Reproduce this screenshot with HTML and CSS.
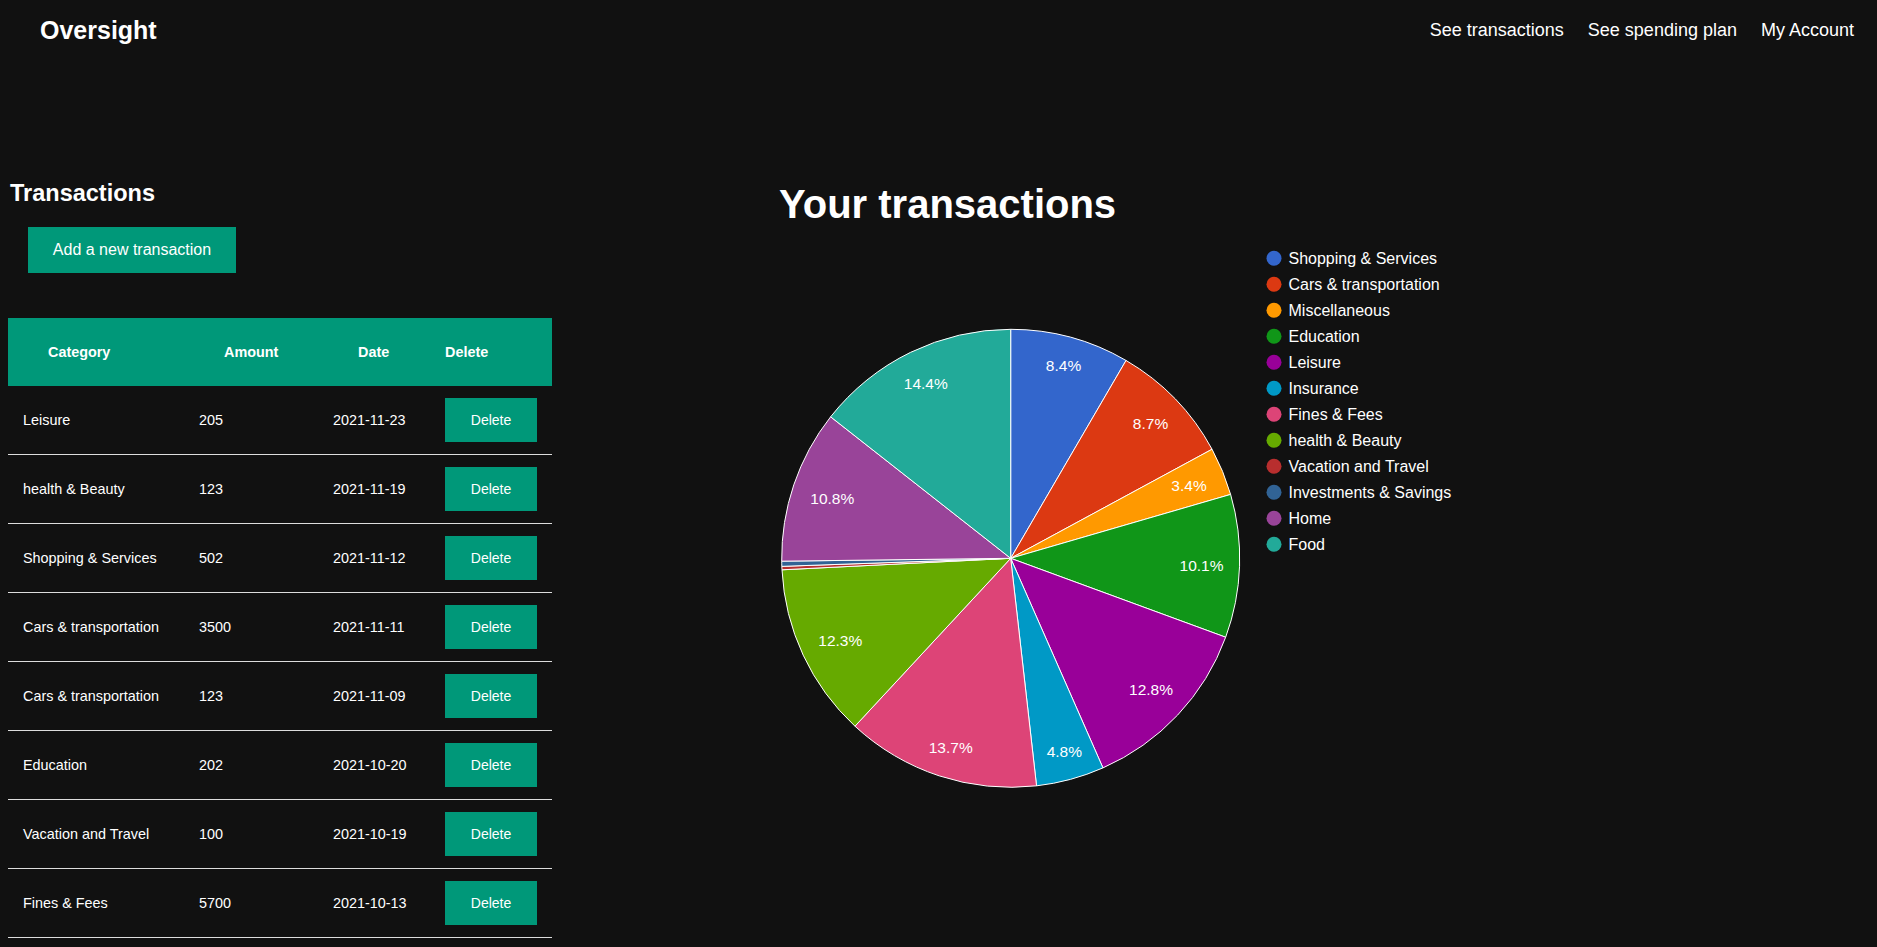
FILE: index.html
```html
<!DOCTYPE html>
<html lang="en">
<head>
<meta charset="utf-8">
<title>Oversight</title>
<link rel="stylesheet" href="styles.css">
</head>
<body>
<header class="topbar">
  <div class="brand">Oversight</div>
  <nav class="nav">
    <a href="#">See transactions</a>
    <a href="#">See spending plan</a>
    <a href="#">My Account</a>
  </nav>
</header>
<main class="content">
  <section class="transactions">
    <h2 class="section-title">Transactions</h2>
    <button class="btn add-btn">Add a new transaction</button>
    <table class="tx-table">
      <colgroup>
        <col class="c-cat"><col class="c-amt"><col class="c-date"><col class="c-del">
      </colgroup>
      <thead>
        <tr><th>Category</th><th>Amount</th><th>Date</th><th>Delete</th></tr>
      </thead>
      <tbody>
        <tr><td>Leisure</td><td>205</td><td>2021-11-23</td><td><button class="btn del-btn">Delete</button></td></tr>
        <tr><td>health &amp; Beauty</td><td>123</td><td>2021-11-19</td><td><button class="btn del-btn">Delete</button></td></tr>
        <tr><td>Shopping &amp; Services</td><td>502</td><td>2021-11-12</td><td><button class="btn del-btn">Delete</button></td></tr>
        <tr><td>Cars &amp; transportation</td><td>3500</td><td>2021-11-11</td><td><button class="btn del-btn">Delete</button></td></tr>
        <tr><td>Cars &amp; transportation</td><td>123</td><td>2021-11-09</td><td><button class="btn del-btn">Delete</button></td></tr>
        <tr><td>Education</td><td>202</td><td>2021-10-20</td><td><button class="btn del-btn">Delete</button></td></tr>
        <tr><td>Vacation and Travel</td><td>100</td><td>2021-10-19</td><td><button class="btn del-btn">Delete</button></td></tr>
        <tr><td>Fines &amp; Fees</td><td>5700</td><td>2021-10-13</td><td><button class="btn del-btn">Delete</button></td></tr>
      </tbody>
    </table>
  </section>
  <section class="chart">
    <h1 class="chart-title">Your transactions</h1>
    <svg class="pie" width="730" height="565" viewBox="770 235 730 565" xmlns="http://www.w3.org/2000/svg">
      <g class="slices" stroke="#ffffff" stroke-width="1">
        <path fill="#3366cc" d="M1010.7 558.3 L1010.7 329.3 A229 229 0 0 1 1126.04 360.46 Z"/>
        <path fill="#dc3912" d="M1010.7 558.3 L1126.04 360.46 A229 229 0 0 1 1212.06 449.25 Z"/>
        <path fill="#ff9900" d="M1010.7 558.3 L1212.06 449.25 A229 229 0 0 1 1230.61 494.41 Z"/>
        <path fill="#109618" d="M1010.7 558.3 L1230.61 494.41 A229 229 0 0 1 1225.67 637.23 Z"/>
        <path fill="#990099" d="M1010.7 558.3 L1225.67 637.23 A229 229 0 0 1 1102.97 767.89 Z"/>
        <path fill="#0099c6" d="M1010.7 558.3 L1102.97 767.89 A229 229 0 0 1 1036.54 785.84 Z"/>
        <path fill="#dd4477" d="M1010.7 558.3 L1036.54 785.84 A229 229 0 0 1 854.98 726.20 Z"/>
        <path fill="#66aa00" d="M1010.7 558.3 L854.98 726.20 A229 229 0 0 1 781.99 569.80 Z"/>
        <path fill="#b82e2e" d="M1010.7 558.3 L781.99 569.80 A229 229 0 0 1 781.84 566.36 Z"/>
        <path fill="#316395" d="M1010.7 558.3 L781.84 566.36 A229 229 0 0 1 781.72 561.18 Z"/>
        <path fill="#994499" d="M1010.7 558.3 L781.72 561.18 A229 229 0 0 1 830.63 416.82 Z"/>
        <path fill="#22aa99" d="M1010.7 558.3 L830.63 416.82 A229 229 0 0 1 1010.7 329.3 Z"/>
      </g>
      <g class="pie-labels" text-anchor="middle">
        <text x="1063.5" y="371">8.4%</text>
        <text x="1150.5" y="428.5">8.7%</text>
        <text x="1189" y="490.5">3.4%</text>
        <text x="1201.5" y="570.5">10.1%</text>
        <text x="1151" y="695">12.8%</text>
        <text x="1064.3" y="756.5">4.8%</text>
        <text x="950.7" y="753">13.7%</text>
        <text x="840.3" y="645.5">12.3%</text>
        <text x="832.3" y="504">10.8%</text>
        <text x="925.8" y="389">14.4%</text>
      </g>
      <g class="legend">
        <circle cx="1274" cy="258.3" r="7.5" fill="#3366cc"/><text x="1288.5" y="264">Shopping &amp; Services</text>
        <circle cx="1274" cy="284.3" r="7.5" fill="#dc3912"/><text x="1288.5" y="290">Cars &amp; transportation</text>
        <circle cx="1274" cy="310.3" r="7.5" fill="#ff9900"/><text x="1288.5" y="316">Miscellaneous</text>
        <circle cx="1274" cy="336.3" r="7.5" fill="#109618"/><text x="1288.5" y="342">Education</text>
        <circle cx="1274" cy="362.3" r="7.5" fill="#990099"/><text x="1288.5" y="368">Leisure</text>
        <circle cx="1274" cy="388.3" r="7.5" fill="#0099c6"/><text x="1288.5" y="394">Insurance</text>
        <circle cx="1274" cy="414.3" r="7.5" fill="#dd4477"/><text x="1288.5" y="420">Fines &amp; Fees</text>
        <circle cx="1274" cy="440.3" r="7.5" fill="#66aa00"/><text x="1288.5" y="446">health &amp; Beauty</text>
        <circle cx="1274" cy="466.3" r="7.5" fill="#b82e2e"/><text x="1288.5" y="472">Vacation and Travel</text>
        <circle cx="1274" cy="492.3" r="7.5" fill="#316395"/><text x="1288.5" y="498">Investments &amp; Savings</text>
        <circle cx="1274" cy="518.3" r="7.5" fill="#994499"/><text x="1288.5" y="524">Home</text>
        <circle cx="1274" cy="544.3" r="7.5" fill="#22aa99"/><text x="1288.5" y="550">Food</text>
      </g>
    </svg>
  </section>
</main>
</body>
</html>
```

FILE: styles.css
```css
* {
  box-sizing: border-box;
}

html,
body {
  margin: 0;
  background: #111111;
  color: #ffffff;
  font-family: "Liberation Sans", Arial, sans-serif;
}

.topbar {
  height: 60px;
  display: flex;
  align-items: center;
  justify-content: space-between;
  padding: 0 23px 0 40px;
}

.brand {
  font-size: 25px;
  font-weight: 700;
  line-height: 30px;
}

.nav {
  display: flex;
  gap: 24px;
}

.nav a {
  color: #ffffff;
  text-decoration: none;
  font-size: 18px;
  line-height: 22px;
}

.content {
  display: flex;
  align-items: flex-start;
  padding-top: 118px;
}

.transactions {
  margin-left: 8px;
  width: 544px;
}

.section-title {
  margin: 1px 0 0;
  padding-left: 2px;
  font-size: 23.5px;
  line-height: 28px;
  font-weight: 700;
}

.btn {
  display: block;
  border: none;
  background: #009879;
  color: #ffffff;
  font-family: "Liberation Sans", Arial, sans-serif;
  padding: 0;
  cursor: pointer;
}

.add-btn {
  margin: 20px 0 45px 20px;
  width: 208px;
  height: 46px;
  font-size: 16px;
}

.tx-table {
  width: 544px;
  table-layout: fixed;
  border-collapse: separate;
  border-spacing: 0;
  font-size: 14.4px;
}

.c-cat { width: 176px; }
.c-amt { width: 134px; }
.c-date { width: 112px; }
.c-del { width: 122px; }

.tx-table th {
  height: 68px;
  padding: 0 0 0 40px;
  background: #009879;
  text-align: left;
  font-weight: 700;
  vertical-align: middle;
}

.tx-table th:last-child {
  padding-left: 15px;
}

.tx-table td {
  padding: 12px 15px;
  border-bottom: 1px solid #dddddd;
  vertical-align: middle;
}

.del-btn {
  width: 92px;
  height: 44px;
  font-size: 14px;
}

.chart {
  margin-left: 218px;
}

.chart-title {
  margin: 3px 0 0 9px;
  font-size: 40px;
  line-height: 46px;
  font-weight: 700;
}

.pie {
  display: block;
  margin-top: 8px;
}

.pie-labels text {
  fill: #ffffff;
  font-family: "Liberation Sans", Arial, sans-serif;
  font-size: 15.5px;
}

.legend text {
  fill: #ffffff;
  font-family: "Liberation Sans", Arial, sans-serif;
  font-size: 16px;
}
```
